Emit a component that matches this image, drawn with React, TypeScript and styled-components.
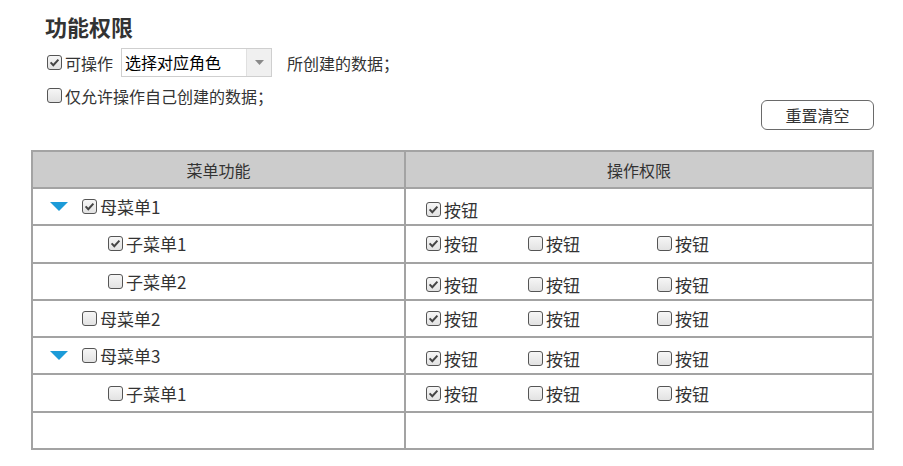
import React from 'react';
import styled, { createGlobalStyle } from 'styled-components';

const GlobalStyle = createGlobalStyle`
  body {
    margin: 0;
    background: #ffffff;
    font-family: 'Noto Sans CJK SC', 'Noto Sans', sans-serif;
    color: #333333;
  }
`;

type Perm = { checked: boolean };

type MenuRow = {
  label: string;
  level: 0 | 1;
  arrow?: boolean;
  checked: boolean;
  perms: Perm[];
  low?: boolean;
};

const rows: MenuRow[] = [
  { label: '母菜单1', level: 0, arrow: true, checked: true, perms: [{ checked: true }], low: true },
  { label: '子菜单1', level: 1, checked: true, perms: [{ checked: true }, { checked: false }, { checked: false }] },
  { label: '子菜单2', level: 1, checked: false, perms: [{ checked: true }, { checked: false }, { checked: false }], low: true },
  { label: '母菜单2', level: 0, checked: false, perms: [{ checked: true }, { checked: false }, { checked: false }] },
  { label: '母菜单3', level: 0, arrow: true, checked: false, perms: [{ checked: true }, { checked: false }, { checked: false }], low: true },
  { label: '子菜单1', level: 1, checked: false, perms: [{ checked: true }, { checked: false }, { checked: false }] },
];

const Check = ({ checked }: { checked: boolean }) => (
  <Box>
    {checked && (
      <svg width='13' height='13' viewBox='0 0 13 13'>
        <path d='M2.6 6.4 L5.3 9.2 L10.4 3.6' fill='none' stroke='#444' strokeWidth='2' />
      </svg>
    )}
  </Box>
);

const App = () => {
  return (
    <>
      <GlobalStyle />
      <Page>
        <Title>功能权限</Title>
        <Toolbar>
          <Options>
            <OptionLine>
              <Check checked />
              <Label>可操作</Label>
              <Select>
                <SelectText>选择对应角色</SelectText>
                <SelectArrow>
                  <svg width='9' height='5' viewBox='0 0 9 5'>
                    <path d='M0 0 H9 L4.5 5 Z' fill='#8a8a8a' />
                  </svg>
                </SelectArrow>
              </Select>
              <Label>所创建的数据；</Label>
            </OptionLine>
            <OptionLine>
              <Check checked={false} />
              <Label>仅允许操作自己创建的数据；</Label>
            </OptionLine>
          </Options>
          <ResetButton>重置清空</ResetButton>
        </Toolbar>
        <Table>
          <HeadRow>
            <HeadCell>菜单功能</HeadCell>
            <HeadCell>操作权限</HeadCell>
          </HeadRow>
          {rows.map((r, i) => (
            <Row key={i}>
              <MenuCell $level={r.level}>
                {r.arrow ? <Arrow /> : <ArrowSpace />}
                <Check checked={r.checked} />
                <Label $size={17}>{r.label}</Label>
              </MenuCell>
              <PermCell $low={r.low}>
                {r.perms.map((p, j) => (
                  <PermItem key={j}>
                    <Check checked={p.checked} />
                    <Label $size={17}>按钮</Label>
                  </PermItem>
                ))}
              </PermCell>
            </Row>
          ))}
          <Row>
            <MenuCell $level={0} />
            <PermCell />
          </Row>
        </Table>
      </Page>
    </>
  );
};

export default App;

const Page = styled.div`
  width: 903px;
  padding: 10px 0 0 31px;
  box-sizing: border-box;
`;

const Title = styled.div`
  font-size: 22px;
  font-weight: 700;
  line-height: 32px;
  color: #333333;
  margin-left: 14px;
`;

const Toolbar = styled.div`
  display: flex;
  justify-content: space-between;
  align-items: flex-start;
  width: 843px;
  margin-top: 6px;
`;

const Options = styled.div`
  display: flex;
  flex-direction: column;
  gap: 4px;
  padding-left: 16px;
`;

const OptionLine = styled.div`
  display: flex;
  align-items: center;
  height: 29px;
`;

const Box = styled.span`
  width: 15px;
  min-width: 15px;
  height: 15px;
  box-sizing: border-box;
  border: 1px solid #555555;
  border-radius: 3px;
  background: linear-gradient(#f6f6f6, #e2e2e2);
  display: inline-flex;
  align-items: center;
  justify-content: center;
  flex-shrink: 0;
  margin-right: 3px;
`;

const Label = styled.span<{ $size?: number }>`
  font-size: ${p => p.$size ?? 16}px;
  color: #333333;
  white-space: nowrap;
`;

const Select = styled.div`
  display: flex;
  align-items: stretch;
  width: 151px;
  height: 29px;
  box-sizing: border-box;
  border: 1px solid #cfcfcf;
  margin: 0 15px 0 8px;
  background: #ffffff;
`;

const SelectText = styled.div`
  flex: 1;
  padding-left: 3px;
  font-size: 16px;
  color: #000000;
  line-height: 27px;
`;

const SelectArrow = styled.div`
  width: 24px;
  background: #f0f0f0;
  border-left: 1px solid #e0e0e0;
  display: flex;
  align-items: center;
  justify-content: center;
`;

const ResetButton = styled.button`
  width: 113px;
  height: 30px;
  margin-top: 52px;
  border: 1px solid #6a6a6a;
  border-radius: 6px;
  background: #ffffff;
  font-family: 'Noto Sans CJK SC', sans-serif;
  font-size: 16px;
  color: #333333;
  padding: 0;
`;

const Table = styled.div`
  width: 843px;
  margin-top: 20px;
  border: 2px solid #a3a3a3;
  border-bottom: none;
  box-sizing: border-box;
`;

const HeadRow = styled.div`
  display: grid;
  grid-template-columns: 373px 1fr;
  height: 37px;
  background: #cccccc;
  border-bottom: 2px solid #a3a3a3;
  box-sizing: border-box;
`;

const HeadCell = styled.div`
  display: flex;
  align-items: center;
  justify-content: center;
  font-size: 16px;
  color: #333333;
  &:first-child {
    border-right: 2px solid #a3a3a3;
  }
`;

const Row = styled.div`
  display: grid;
  grid-template-columns: 373px 1fr;
  height: 37.3px;
  border-bottom: 2px solid #a3a3a3;
  box-sizing: border-box;
`;

const MenuCell = styled.div<{ $level: number }>`
  display: flex;
  align-items: center;
  padding-left: ${p => 17 + p.$level * 26}px;
  border-right: 2px solid #a3a3a3;
`;

const Arrow = styled.span`
  width: 0;
  height: 0;
  border-left: 9px solid transparent;
  border-right: 9px solid transparent;
  border-top: 9px solid #1c9bd8;
  margin-right: 14px;
`;

const ArrowSpace = styled.span`
  width: 18px;
  margin-right: 14px;
`;

const PermCell = styled.div<{ $low?: boolean }>`
  display: grid;
  grid-template-columns: 102px 129px auto;
  align-items: center;
  padding-left: 20px;
  padding-top: ${p => (p.$low ? 6 : 0)}px;
`;

const PermItem = styled.div`
  display: flex;
  align-items: center;
`;
